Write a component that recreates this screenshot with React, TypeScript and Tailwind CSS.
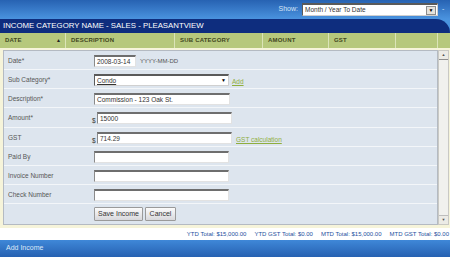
import React from "react";

const inputBox =
  "h-[12px] bg-white border-t-2 border-l border-r border-b border-t-[#6e6e6e] border-l-[#8a8a8a] border-r-[#e2e2e2] border-b-[#e2e2e2] text-[6.5px] text-[#333] leading-[10px] pl-[2px]";

interface RowProps {
  label: string;
  children?: React.ReactNode;
  last?: boolean;
  h?: string;
}

function Row({ label, children, last, h = "h-[19px]" }: RowProps) {
  return (
    <div className={`flex ${h} ${last ? "" : "border-b border-[#f3f6f9]"}`}>
      <div className="w-[90px] shrink-0 pl-[4px] pt-[5px] text-[6.5px] text-[#555]">{label}</div>
      <div className="flex items-start pt-[4px]">{children}</div>
    </div>
  );
}

function HeaderCell({ label, w, arrow }: { label: string; w: string; arrow?: boolean }) {
  return (
    <div className={`${w} shrink-0 h-full flex items-center justify-between pl-[5px] pr-[4px] border-r border-[#dbe4b8]`}>
      <span className="text-[6px] font-bold tracking-[0.2px] text-[#3f4620]">{label}</span>
      {arrow && <span className="text-[5px] text-[#222]">▲</span>}
    </div>
  );
}

export default function App() {
  return (
    <div className="w-[450px] h-[257px] overflow-hidden flex flex-col bg-white font-['Liberation_Sans',Arial,sans-serif]">
      {/* top bar */}
      <div className="h-[19px] shrink-0 bg-linear-to-b from-[#2762b2] to-[#4a93df] flex items-center justify-end pr-[2px]">
        <span className="text-[7px] text-[#d6e5f7] mr-[4px]">Show:</span>
        <div className="w-[136px] h-[13px] bg-white border-t-2 border-l border-[#5a5a5a] border-r border-b border-r-[#cfcfcf] border-b-[#cfcfcf] flex items-center justify-between">
          <span className="text-[6.5px] text-[#333] pl-[2px]">Month / Year To Date</span>
          <div className="w-[10px] h-[9px] mr-[1px] bg-[#e4e2dc] border border-[#8c8c8c] flex items-center justify-center">
            <span className="text-[5px] leading-none text-black">▼</span>
          </div>
        </div>
        <span className="text-[7px] text-[#d6e5f7] ml-[4px] w-[6px]">-</span>
      </div>

      {/* title */}
      <div className="h-[14px] shrink-0 bg-[#4a93df]">
        <div className="h-full bg-[#0e2d7e] flex items-center pl-[3px] rounded-tr-[14px]">
          <span className="text-[7.8px] text-white uppercase">Income Category Name - Sales - Pleasantview</span>
        </div>
      </div>

      {/* column header */}
      <div className="h-[15px] shrink-0 bg-[#b6c87c] flex">
        <HeaderCell label="DATE" w="w-[66px]" arrow />
        <HeaderCell label="DESCRIPTION" w="w-[109px]" />
        <HeaderCell label="SUB CATEGORY" w="w-[88px]" />
        <HeaderCell label="AMOUNT" w="w-[66px]" />
        <HeaderCell label="GST" w="w-[67px]" />
        <HeaderCell label="" w="w-[42px]" />
        <div className="flex-1" />
      </div>

      {/* main */}
      <div className="h-[180px] shrink-0 bg-[#f6f4da] flex pt-[2px] pl-[3px] pr-[1px] pb-[3px]">
        <div className="w-[435px] h-full border border-[#b4bac2] bg-[#dde5ee] flex flex-col">
          <Row label="Date*">
            <div className={`${inputBox} w-[42px]`}>2008-03-14</div>
            <span className="text-[6px] text-[#555] ml-[4px] mt-[2px]">YYYY-MM-DD</span>
          </Row>
          <Row label="Sub Category*">
            <div className="w-[135px] h-[12px] bg-white border-t-2 border-l border-[#5a5a5a] border-r border-b border-r-[#d0d0d0] border-b-[#d0d0d0] flex items-center justify-between">
              <span className="text-[6.5px] text-[#333] underline pl-[2px]">Condo</span>
              <span className="text-[5px] text-black mr-[2px]">▼</span>
            </div>
            <span className="text-[6.5px] text-[#8fae3e] underline ml-[3px] mt-[3px]">Add</span>
          </Row>
          <Row label="Description*">
            <div className={`${inputBox} w-[136px]`}>Commission - 123 Oak St.</div>
          </Row>
          <Row label="Amount*" h="h-[20px]">
            <span className="text-[6.5px] text-[#333] w-[3px] mt-[4px] -ml-[2px] mr-[2px]">$</span>
            <div className={`${inputBox} w-[135px]`}>15000</div>
          </Row>
          <Row label="GST" h="h-[20px]">
            <span className="text-[6.5px] text-[#333] w-[3px] mt-[4px] -ml-[2px] mr-[2px]">$</span>
            <div className={`${inputBox} w-[135px]`}>714.29</div>
            <span className="text-[6.5px] text-[#8fae3e] underline ml-[4px] mt-[3px]">GST calculation</span>
          </Row>
          <Row label="Paid By">
            <div className={`${inputBox} w-[135px]`} />
          </Row>
          <Row label="Invoice Number">
            <div className={`${inputBox} w-[135px]`} />
          </Row>
          <Row label="Check Number">
            <div className={`${inputBox} w-[135px]`} />
          </Row>
          <div className="flex h-[20px] pt-[3px]">
            <div className="w-[90px] shrink-0" />
            <button className="h-[14px] w-[49px] border border-[#9a9a9a] rounded-[1px] bg-linear-to-b from-[#fbfbfb] to-[#d8d8dc] text-[7px] text-[#333]">
              Save Income
            </button>
            <button className="h-[14px] w-[31px] ml-[2px] border border-[#9a9a9a] rounded-[1px] bg-linear-to-b from-[#fbfbfb] to-[#d8d8dc] text-[7px] text-[#333]">
              Cancel
            </button>
          </div>
        </div>
        {/* scrollbar */}
        <div className="w-[11px] h-full bg-[#f1f1ee] border border-[#c9c9c4] flex flex-col justify-between">
          <div className="h-[9px] bg-[#ecebe6] border-b border-[#8e8e8e] flex items-center justify-center">
            <span className="text-[4px] leading-none text-[#555]">▲</span>
          </div>
          <div className="h-[9px] bg-[#ecebe6] border-t border-[#bdbdbd] flex items-center justify-center">
            <span className="text-[4px] leading-none text-[#555]">▼</span>
          </div>
        </div>
      </div>

      {/* totals */}
      <div className="h-[12px] shrink-0 flex items-center justify-end gap-[8px] pr-[1px] text-[6px] text-[#1e4f9e]">
        <span>YTD Total: $15,000.00</span>
        <span>YTD GST Total: $0.00</span>
        <span>MTD Total: $15,000.00</span>
        <span>MTD GST Total: $0.00</span>
      </div>

      {/* bottom bar */}
      <div className="flex-1 bg-linear-to-b from-[#3f88d8] to-[#2661b2] flex items-center pl-[6px]">
        <span className="text-[7px] text-[#dce9f9]">Add Income</span>
      </div>
    </div>
  );
}
